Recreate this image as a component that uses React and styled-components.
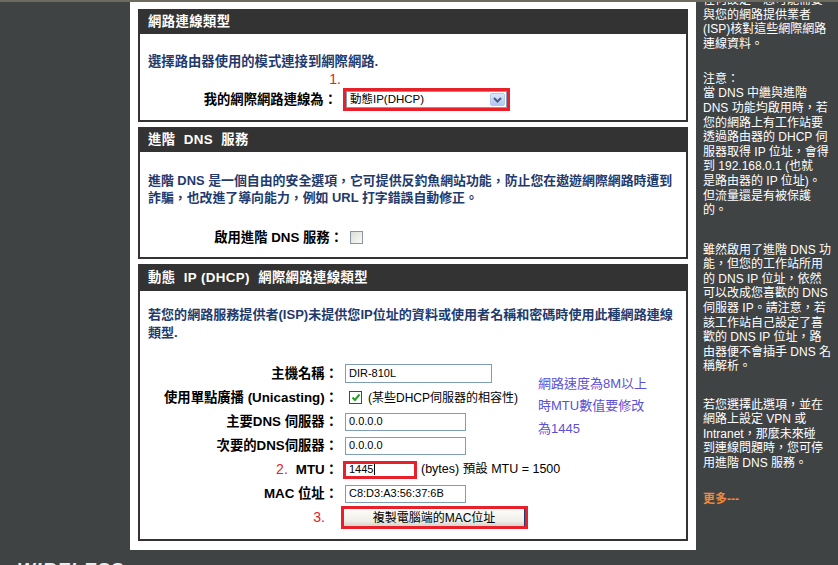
import { createGlobalStyle, styled } from "styled-components";

const GlobalStyle = createGlobalStyle`
  html, body {
    margin: 0;
    padding: 0;
    background: #404344;
    overflow: hidden;
  }
  body {
    font-family: "Liberation Sans", "Noto Sans CJK TC", sans-serif;
  }
`;

const Page = styled.div`
  /* 전체 틀 */
  width: 838px;
  height: 565px;
  box-sizing: border-box;
  border-top: 2px solid #6d6b5f;
  background: #404344;
  display: flex;
  align-items: flex-start;
  overflow: hidden;
`;

const LeftCol = styled.div`
  width: 130px;
  flex: none;
  height: 563px;
  padding-top: 558px;
  box-sizing: border-box;
  overflow: hidden;
`;

const Logo = styled.div`
  padding-left: 17px;
  font: italic bold 19px/1 "Liberation Sans", sans-serif;
  letter-spacing: 1px;
  color: #ececec;
`;

const Main = styled.main`
  width: 566px;
  flex: none;
  background: #fff;
  padding: 7px 8px 9px;
  box-sizing: border-box;
  display: flex;
  flex-direction: column;
  gap: 5px;
`;

const Section = styled.section`
  display: flex;
  flex-direction: column;
`;

const SectionHeader = styled.h2`
  margin: 0;
  height: ${(p) => p.$h}px;
  background: #333;
  color: #fff;
  font: bold 13.33px/1 "Liberation Sans", "Noto Sans CJK TC", sans-serif;
  letter-spacing: 0.4px;
  padding-left: 10px;
  display: flex;
  align-items: center;
  white-space: pre;
`;

const SectionBody = styled.div`
  border: 2px solid #333;
  border-top: none;
  padding-bottom: ${(p) => p.$pb}px;
`;

const Intro = styled.p`
  margin: ${(p) => p.$mt}px 0 0;
  padding: 0 8px;
  color: #1f3a6d;
  font: bold ${(p) => p.$fs || 13.33}px / ${(p) => p.$lh}px "Liberation Sans",
    "Noto Sans CJK TC", sans-serif;
  white-space: nowrap;
`;

const Form = styled.div`
  display: grid;
  grid-template-columns: ${(p) => p.$cols};
  grid-template-rows: ${(p) => p.$rows || "none"};
  grid-auto-rows: 24px;
  column-gap: ${(p) => p.$gap}px;
  align-items: center;
  margin-top: ${(p) => p.$mt}px;
`;

const Label = styled.div`
  grid-column: 1;
  text-align: right;
  font: bold 13.33px/1 "Liberation Sans", "Noto Sans CJK TC", sans-serif;
  color: #000;
  white-space: nowrap;
  padding-right: ${(p) => p.$pr || 0}px;
`;

const Marker = styled.span`
  color: #e8202a;
  font: 14px/1 "Liberation Sans", sans-serif;
  margin-right: ${(p) => p.$mr || 0}px;
`;

const Value = styled.div`
  grid-column: ${(p) => (p.$wide ? "2 / 4" : "2")};
  display: flex;
  align-items: center;
  white-space: nowrap;
  margin-left: ${(p) => p.$ml || 0}px;
`;

const Field = styled.div`
  width: ${(p) => p.$w}px;
  height: ${(p) => p.$h}px;
  box-sizing: border-box;
  border: ${(p) => (p.$bare ? "none" : "1px solid #7f9db9")};
  background: #fff;
  padding-left: 3px;
  display: flex;
  align-items: center;
  font: 11px/1 "Liberation Sans", sans-serif;
  color: #000;
`;

const Caret = styled.span`
  width: 1px;
  height: 11px;
  background: #000;
  margin-left: 1px;
`;

const RedFrame = styled.div`
  border: 3px solid #e8202a;
  display: flex;
`;

const SelectBox = styled.div`
  width: 161px;
  height: 17px;
  box-sizing: border-box;
  border: 1px solid #7f9db9;
  background: #fff;
  display: flex;
  align-items: center;
  justify-content: space-between;
  padding: 0 1px 0 3px;
  font: 11.5px/1 "Liberation Sans", "Noto Sans CJK TC", sans-serif;
  color: #000;
`;

const DropBtn = styled.span`
  width: 15px;
  height: 13px;
  box-sizing: border-box;
  border: 1px solid #b7c8ef;
  border-radius: 2px;
  background: linear-gradient(#dce6fc, #b3c7f5);
  display: flex;
  align-items: center;
  justify-content: center;
`;

const Check = styled.span`
  width: 13px;
  height: 13px;
  box-sizing: border-box;
  flex: none;
  border: 1px solid ${(p) => (p.$checked ? "#1c5180" : "#8796a6")};
  background: ${(p) =>
    p.$checked ? "#fff" : "linear-gradient(135deg, #dcdcd5, #fbfbf8)"};
  display: inline-flex;
  align-items: center;
  justify-content: center;
`;

const Small = styled.span`
  font: ${(p) => p.$fs || 12}px/1 "Liberation Sans", "Noto Sans CJK TC", sans-serif;
  color: #000;
  margin-left: ${(p) => p.$ml || 0}px;
`;

const Note = styled.div`
  grid-column: 3;
  grid-row: 1 / 5;
  align-self: start;
  padding-top: 11px;
  color: #5a50d8;
  font: 13px/22.5px "Liberation Sans", "Noto Sans CJK TC", sans-serif;
  white-space: nowrap;
`;

const XpButton = styled.div`
  width: 181px;
  height: 17px;
  box-sizing: border-box;
  border-right: 1px solid #1f3a6e;
  background: linear-gradient(#fdfdfb, #efeee9 70%, #d8d3c8);
  display: flex;
  align-items: center;
  justify-content: center;
  font: 12px/1 "Liberation Sans", "Noto Sans CJK TC", sans-serif;
  color: #000;
`;

const Sidebar = styled.aside`
  flex: 1;
  height: 563px;
  padding-left: 7px;
  box-sizing: border-box;
  overflow: hidden;
  color: #fff;
  font: 12px/14.6px "Liberation Sans", "Noto Sans CJK TC", sans-serif;
  white-space: nowrap;
`;

const SideInner = styled.div`
  margin-top: -9px;
`;

const SidePara = styled.p`
  margin: ${(p) => p.$mt || 0}px 0 0;
`;

const MoreLink = styled.a`
  color: #ee8a3a;
  font-weight: bold;
  text-decoration: none;
`;

const Chevron = () => (
  <svg width="9" height="6" viewBox="0 0 9 6">
    <path d="M1 1 L4.5 4.5 L8 1" fill="none" stroke="#4a5d82" strokeWidth="2" />
  </svg>
);

const Tick = () => (
  <svg width="10" height="9" viewBox="0 0 10 9">
    <path d="M1.5 4.5 L4 7 L8.5 1.5" fill="none" stroke="#21a121" strokeWidth="2" />
  </svg>
);

const App = () => {
  return (
    <Page>
      <GlobalStyle />
      <LeftCol>
        <Logo>WIRELESS</Logo>
      </LeftCol>

      <Main>
        <Section>
          <SectionHeader $h={25}>網路連線類型</SectionHeader>
          <SectionBody $pb={9}>
            <Intro $mt={18.5} $lh={17}>
              選擇路由器使用的模式連接到網際網路.
            </Intro>
            <Form $cols="197px 1fr" $rows="18.5px 23px" $gap={6} $mt={0}>
              <Label>
                <Marker $mr={-4}>1.</Marker>
              </Label>
              <Value />
              <Label>我的網際網路連線為：</Label>
              <Value>
                <RedFrame>
                  <SelectBox>
                    動態IP(DHCP)
                    <DropBtn>
                      <Chevron />
                    </DropBtn>
                  </SelectBox>
                </RedFrame>
              </Value>
            </Form>
          </SectionBody>
        </Section>

        <Section>
          <SectionHeader $h={25}>進階  DNS  服務</SectionHeader>
          <SectionBody $pb={9.5}>
            <Intro $mt={19.5} $lh={17} $fs={12.9}>
              進階 DNS 是一個自由的安全選項，它可提供反釣魚網站功能，防止您在遨遊網際網路時遭到
              <br />
              詐騙，也改進了導向能力，例如 URL 打字錯誤自動修正。
            </Intro>
            <Form $cols="203px 1fr" $rows="20px" $gap={7} $mt={22}>
              <Label>啟用進階 DNS 服務：</Label>
              <Value>
                <Check />
              </Value>
            </Form>
          </SectionBody>
        </Section>

        <Section>
          <SectionHeader $h={27}>動態  IP (DHCP)  網際網路連線類型</SectionHeader>
          <SectionBody $pb={9.5}>
            <Intro $mt={15} $lh={18} $fs={13.05}>
              若您的網路服務提供者(ISP)未提供您IP位址的資料或使用者名稱和密碼時使用此種網路連線
              <br />
              類型.
            </Intro>
            <Form $cols="198px 186px 1fr" $gap={7} $mt={19.5}>
              <Label>主機名稱：</Label>
              <Value>
                <Field $w={147} $h={19}>DIR-810L</Field>
              </Value>
              <Note>
                網路速度為8M以上
                <br />
                時MTU數值要修改
                <br />
                為1445
              </Note>

              <Label>使用單點廣播 (Unicasting)：</Label>
              <Value $ml={4}>
                <Check $checked>
                  <Tick />
                </Check>
                <Small $ml={6}>(某些DHCP伺服器的相容性)</Small>
              </Value>

              <Label>主要DNS 伺服器：</Label>
              <Value>
                <Field $w={121} $h={18}>0.0.0.0</Field>
              </Value>

              <Label>次要的DNS伺服器：</Label>
              <Value>
                <Field $w={121} $h={18}>0.0.0.0</Field>
              </Value>

              <Label>
                <Marker $mr={8}>2.</Marker>MTU：
              </Label>
              <Value $wide $ml={-2}>
                <RedFrame>
                  <Field $w={68} $h={12} $bare>
                    1445
                    <Caret />
                  </Field>
                </RedFrame>
                <Small $ml={4} $fs={12.5}>(bytes) 預設 MTU = 1500</Small>
              </Value>

              <Label>MAC 位址：</Label>
              <Value $wide>
                <Field $w={121} $h={18}>C8:D3:A3:56:37:6B</Field>
              </Value>

              <Label $pr={13}>
                <Marker>3.</Marker>
              </Label>
              <Value $wide $ml={-4}>
                <RedFrame>
                  <XpButton>複製電腦端的MAC位址</XpButton>
                </RedFrame>
              </Value>
            </Form>
          </SectionBody>
        </Section>
      </Main>

      <Sidebar>
        <SideInner>
          <SidePara>
            任何設定，您可能需要
            <br />
            與您的網路提供業者
            <br />
            (ISP)核對這些網際網路
            <br />
            連線資料。
          </SidePara>
          <SidePara $mt={20.4}>
            注意：
            <br />
            當 DNS 中繼與進階
            <br />
            DNS 功能均啟用時，若
            <br />
            您的網路上有工作站要
            <br />
            透過路由器的 DHCP 伺
            <br />
            服器取得 IP 位址，會得
            <br />
            到 192.168.0.1 (也就
            <br />
            是路由器的 IP 位址)。
            <br />
            但流量還是有被保護
            <br />
            的。
          </SidePara>
          <SidePara $mt={25}>
            雖然啟用了進階 DNS 功
            <br />
            能，但您的工作站所用
            <br />
            的 DNS IP 位址，依然
            <br />
            可以改成您喜歡的 DNS
            <br />
            伺服器 IP。請注意，若
            <br />
            該工作站自己設定了喜
            <br />
            歡的 DNS IP 位址，路
            <br />
            由器便不會插手 DNS 名
            <br />
            稱解析。
          </SidePara>
          <SidePara $mt={23.6}>
            若您選擇此選項，並在
            <br />
            網路上設定 VPN 或
            <br />
            Intranet，那麼未來碰
            <br />
            到連線問題時，您可停
            <br />
            用進階 DNS 服務。
          </SidePara>
          <SidePara $mt={21}>
            <MoreLink href="#">更多---</MoreLink>
          </SidePara>
        </SideInner>
      </Sidebar>
    </Page>
  );
};

export default App;
